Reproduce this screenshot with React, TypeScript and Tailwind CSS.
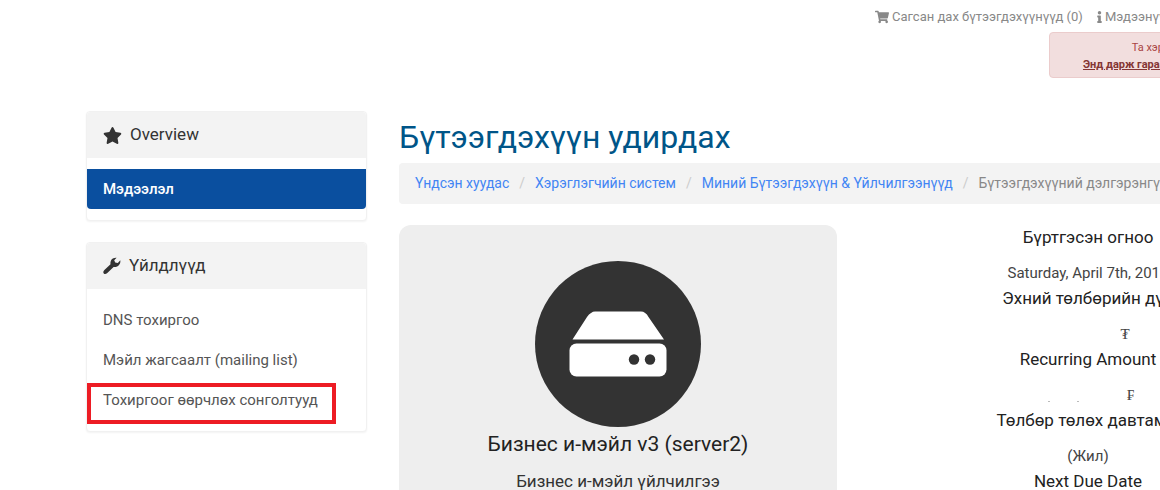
import { FaShoppingCart, FaInfo, FaStar } from 'react-icons/fa';
import type { ReactNode } from 'react';

const actions = ['DNS тохиргоо', 'Мэйл жагсаалт (mailing list)', 'Тохиргоог өөрчлөх сонголтууд'];
const crumbs = ['Үндсэн хуудас', 'Хэрэглэгчийн систем', 'Миний Бүтээгдэхүүн & Үйлчилгээнүүд'];

function WrenchIcon() {
  return (
    <svg viewBox="0 0 18 18" className="size-[18px]" fill="currentColor" aria-hidden="true">
      <path d="M7.500 7.200 C7 3.200 9.500 0.300 13.600 0.700 L11.200 3.200 L12.200 5.600 L14.800 6 L17.300 3.200 C18 7.300 14.500 10.600 10.600 9.900 L4.300 16 C3 17.300 1.600 17.400 0.800 16.600 C0 15.700 0.200 14.200 1.400 13.100 Z" />
    </svg>
  );
}

function Panel({ icon, title, children }: { icon: ReactNode; title: string; children: ReactNode }) {
  return (
    <section className="rounded border border-[#f1f1f1] bg-white shadow-xs">
      <h2 className="flex h-[46px] items-center gap-2 rounded-t bg-[#f3f3f3] px-4 text-[17px] text-[#333]">
        {icon}
        {title}
      </h2>
      {children}
    </section>
  );
}

function Detail({ label, children }: { label: string; children: ReactNode }) {
  return (
    <div className="mb-px">
      <dt className="text-[17px] leading-6 text-[#222]">{label}</dt>
      <dd className="mt-3 flex h-6 items-center justify-center text-[15px] leading-6 text-[#444]">{children}</dd>
    </div>
  );
}

function ServerIcon() {
  return (
    <svg viewBox="0 0 166 166" className="size-[166px]" aria-hidden="true">
      <circle cx="83" cy="83" r="83" fill="#333" />
      <path d="M37.500 78.500 L52 56 Q56 50.500 60 50.500 H106 Q110.500 50.500 113.500 56 L129 78.500 Z" fill="#fff" />
      <rect x="34.500" y="82.500" width="97" height="33" rx="7" fill="#fff" />
      <circle cx="99" cy="98.500" r="5.200" fill="#333" />
      <circle cx="115" cy="98.500" r="5.200" fill="#333" />
    </svg>
  );
}

export default function App() {
  return (
    <div className="h-screen overflow-hidden bg-white font-[Roboto,sans-serif]">
      <div className="min-w-[1307px] max-w-[1307px] pl-[86px]">
        <header className="flex h-[111px] flex-col items-end pt-2">
          <nav className="flex w-[432px] gap-[14px] whitespace-nowrap text-[13px] leading-[18px] text-[#888]">
            <a href="#cart" className="flex items-center gap-[3px]">
              <FaShoppingCart className="size-[14px]" />
              Сагсан дах бүтээгдэхүүнүүд (0)
            </a>
            <a href="#news" className="flex items-center gap-[3px]">
              <FaInfo className="h-3 w-[5px]" />
              Мэдээнүүд
            </a>
          </nav>
          <div className="mt-[6px] w-[258px] rounded border border-[#ebcccc] bg-[#f2dede] pt-[6px] pb-1 text-center text-[11px] leading-[17px] text-[#a94442]">
            <p>Та хэрэглэгчээр н</p>
            <a href="#logout" className="font-bold text-[#843534] underline">
              Энд дарж гараар баталгаажуулна уу
            </a>
          </div>
        </header>
        <div className="flex gap-8">
          <aside className="flex w-[281px] shrink-0 flex-col gap-[21px]">
            <Panel icon={<FaStar className="size-[19px]" />} title="Overview">
              <div className="py-[11px]">
                <a href="#info" className="block rounded-b bg-[#0a4f9f] px-4 py-2 text-[15px] font-medium leading-6 text-white">
                  Мэдээлэл
                </a>
              </div>
            </Panel>
            <Panel icon={<WrenchIcon />} title="Үйлдлүүд">
              <ul className="relative py-[11px]">
                {actions.map((a) => (
                  <li key={a}>
                    <a href="#action" className="block px-4 py-2 text-[15px] leading-6 text-[#555]">
                      {a}
                    </a>
                  </li>
                ))}
                <li aria-hidden="true" className="absolute bottom-[7px] left-0 h-[41px] w-[249px] border-4 border-[#ed1c24]" />
              </ul>
            </Panel>
          </aside>
          <main className="min-w-0 flex-1">
            <h1 className="pt-[6px] text-[32px] leading-10 text-[#058]">Бүтээгдэхүүн удирдах</h1>
            <nav className="mt-[6px] flex h-[41px] items-center whitespace-nowrap rounded bg-[#f3f3f3] px-4 pb-px text-sm">
              {crumbs.map((c) => (
                <span key={c} className="flex">
                  <a href="#crumb" className="text-[#4285f4]">
                    {c}
                  </a>
                  <span className="px-[10px] text-[#ccc]">/</span>
                </span>
              ))}
              <span className="text-[#888]">Бүтээгдэхүүний дэлгэрэнгүй</span>
            </nav>
            <div className="mt-[21px] grid grid-cols-2 gap-8 text-center">
              <section className="flex flex-col items-center rounded-xl bg-[#eee] pt-9 pb-10">
                <ServerIcon />
                <h3 className="mt-[2px] text-[21px] leading-[30px] text-[#222]">Бизнес и-мэйл v3 (server2)</h3>
                <p className="mt-[10px] text-[17px] leading-6 text-[#333]">Бизнес и-мэйл үйлчилгээ</p>
              </section>
              <dl>
                <Detail label="Бүртгэсэн огноо">Saturday, April 7th, 2018</Detail>
                <Detail label="Эхний төлбөрийн дүн">
                  <span className="pl-[74px] font-['Liberation_Serif',serif]">₮</span>
                </Detail>
                <Detail label="Recurring Amount">
                  <span className="flex w-[176px] items-center pl-12 font-['Liberation_Serif',serif]">
                    <span className="mt-3 h-px w-[2px] bg-[#bbb]" />
                    <span className="mt-3 ml-[27px] h-px w-[2px] bg-[#bbb]" />
                    <span className="ml-12">₣</span>
                  </span>
                </Detail>
                <Detail label="Төлбөр төлөх давтамж">(Жил)</Detail>
                <Detail label="Next Due Date">{null}</Detail>
              </dl>
            </div>
          </main>
        </div>
      </div>
    </div>
  );
}
